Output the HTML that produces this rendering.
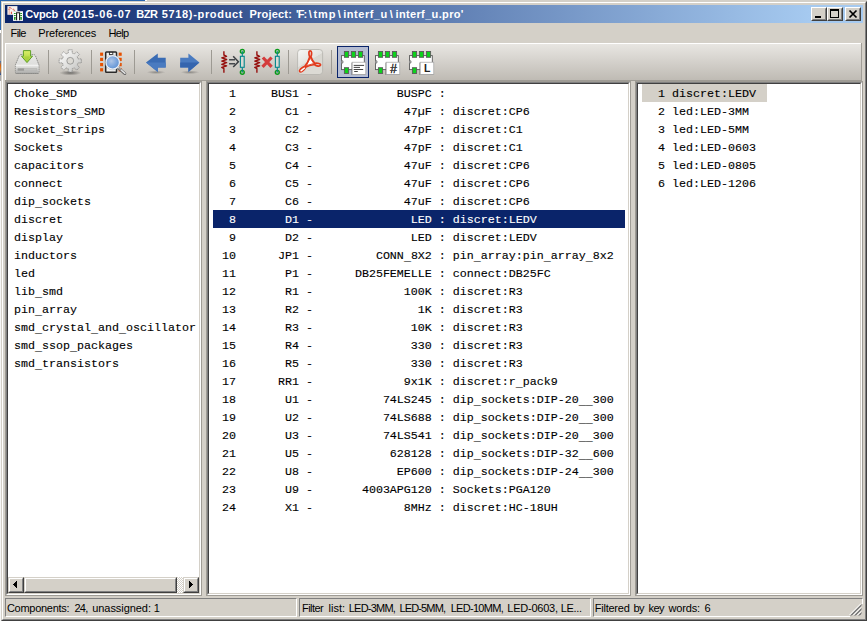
<!DOCTYPE html><html><head><meta charset="utf-8"><title>Cvpcb</title><style>
html,body{margin:0;padding:0}
body{width:867px;height:621px;position:relative;overflow:hidden;background:#D4D0C8;font-family:"Liberation Sans",sans-serif;font-size:11px;color:#000}
.a{position:absolute}
.t{position:absolute;white-space:pre;line-height:14px;height:14px}
.mono{font-family:"Liberation Mono",monospace;font-size:11.665px}
.row{position:absolute;left:0;height:18px;line-height:18px;white-space:pre;font-family:"Liberation Mono",monospace;font-size:11.665px;color:#000}
.row span{position:relative;top:1px;-webkit-text-stroke:0.12px}
.row u{text-decoration:none;position:relative;top:2px}
.panel{position:absolute;background:#fff;overflow:hidden}
.sunk{position:absolute;box-sizing:border-box;border:1px solid;border-color:#808080 #fff #fff #808080}
.sunk2{position:absolute;box-sizing:border-box;border:1px solid;border-color:#404040 #D4D0C8 #D4D0C8 #404040}
.btn{position:absolute;box-sizing:border-box;background:#D4D0C8;border:1px solid;border-color:#fff #404040 #404040 #fff}
.btn:after{content:"";position:absolute;left:0;top:0;right:0;bottom:0;border:1px solid;border-color:#D4D0C8 #808080 #808080 #D4D0C8}
.sb{position:absolute;box-sizing:border-box;background:#D4D0C8;border:1px solid;border-color:#D4D0C8 #404040 #404040 #D4D0C8}
.sb:after{content:"";position:absolute;left:0;top:0;right:0;bottom:0;border:1px solid;border-color:#fff #808080 #808080 #fff}
.sep{position:absolute;width:1px;top:50px;height:24px;background:#9D9A93}
.fld{position:absolute;box-sizing:border-box;top:598px;height:19px;border:1px solid;border-color:#808080 #fff #fff #808080}
</style></head><body>
<div class="a" style="left:0;top:0;width:145px;height:1px;background:#2A66AE"></div>
<div class="a" style="left:145px;top:0;width:2px;height:1px;background:#fff"></div>
<div class="a" style="left:0;top:0;width:1px;height:30px;background:#2A66AE"></div>
<div class="a" style="left:0;top:30px;width:1px;height:3px;background:#fff"></div>
<div class="a" style="left:0;top:33px;width:1px;height:48px;background:#A8A8A8"></div>
<div class="a" style="left:0;top:81px;width:1px;height:540px;background:#F6F6F6"></div>
<div class="a" style="left:0;top:61px;width:1px;height:14px;background:linear-gradient(#3A7AC0,#D06010 30%,#E08020 60%,#2050A0)"></div>
<div class="a" style="left:1px;top:1px;width:866px;height:620px;box-sizing:border-box;border:1px solid;border-color:#D4D0C8 #404040 #404040 #D4D0C8;background:#D4D0C8"></div>
<div class="a" style="left:2px;top:2px;width:864px;height:618px;box-sizing:border-box;border:1px solid;border-color:#fff #808080 #808080 #fff"></div>
<div class="a" style="left:5px;top:5px;width:858px;height:18px;background:linear-gradient(90deg,#0A246A,#A6CAF0 94%)"></div>
<svg class="a" style="left:7px;top:6px" width="16" height="16" viewBox="0 0 16 16"><rect x="0.4" y="0.1" width="10" height="8.7" fill="#f6f2f0"/><path d="M2.2 1.2V8.6" stroke="#E8A090" stroke-width="0.8" fill="none"/><path d="M1 3.4H3.2" stroke="#E89080" stroke-width="0.9" fill="none"/><path d="M2.6 1.2L4.4 2.6M5.8 3L7.6 4.6M4 6L5 6.8L4 7.6" stroke="#D63A2A" stroke-width="1.1" fill="none" stroke-dasharray="1 0.5"/><rect x="6.05" y="5.2" width="9.9" height="9.7" fill="#fff"/><path d="M6.3 5.4H13.5" stroke="#aaa" stroke-width="0.5"/><path d="M9.6 14.2V6.8H12.6V14.2" fill="#fff" stroke="#1c1c1c" stroke-width="1.1"/><g fill="#0A8A0A"><rect x="6.9" y="7.1" width="1.8" height="0.9"/><rect x="6.9" y="9" width="1.8" height="0.9"/><rect x="7.1" y="10.7" width="1.4" height="3.2" rx="0.6"/><rect x="13.2" y="7.1" width="1.8" height="0.9"/><rect x="13.2" y="9" width="1.8" height="0.9"/><rect x="13.4" y="10.7" width="1.4" height="3.2" rx="0.6"/></g></svg>
<div class="t " style="left:25.3px;top:7px;letter-spacing:-0.155px;font-weight:bold;color:#fff;">Cvpcb</div>
<div class="t " style="left:62.7px;top:7px;letter-spacing:0.806px;font-weight:bold;color:#fff;">(2015-06-07</div>
<div class="t " style="left:136.2px;top:7px;letter-spacing:-0.400px;font-weight:bold;color:#fff;">BZR</div>
<div class="t " style="left:161.7px;top:7px;letter-spacing:0.672px;font-weight:bold;color:#fff;">5718)-product</div>
<div class="t " style="left:249.4px;top:7px;letter-spacing:0.220px;font-weight:bold;color:#fff;">Project:</div>
<div class="t " style="left:296px;top:7px;letter-spacing:-0.900px;font-weight:bold;color:#fff;">'F:</div>
<div class="t " style="left:308.72px;top:7px;letter-spacing:0.000px;font-weight:bold;color:#fff;">\</div>
<div class="t " style="left:313.4px;top:7px;letter-spacing:0.970px;font-weight:bold;color:#fff;">tmp</div>
<div class="t " style="left:337.77px;top:7px;letter-spacing:0.000px;font-weight:bold;color:#fff;">\</div>
<div class="t " style="left:343.3px;top:7px;letter-spacing:0.509px;font-weight:bold;color:#fff;">interf_u</div>
<div class="t " style="left:389.82px;top:7px;letter-spacing:0.000px;font-weight:bold;color:#fff;">\</div>
<div class="t " style="left:395.5px;top:7px;letter-spacing:0.355px;font-weight:bold;color:#fff;">interf_u.pro'</div>
<div class="btn" style="left:811px;top:7px;width:16px;height:14px"></div>
<div class="a" style="left:815px;top:16px;width:6px;height:2px;background:#000"></div>
<div class="btn" style="left:827px;top:7px;width:16px;height:14px"></div>
<div class="a" style="left:830px;top:9px;width:9px;height:9px;box-sizing:border-box;border:1px solid #000;border-top-width:2px"></div>
<div class="btn" style="left:845px;top:7px;width:16px;height:14px"></div>
<svg class="a" style="left:845px;top:7px" width="16" height="14" viewBox="0 0 16 14"><path d="M4.5 3.5L11.5 10.5M11.5 3.5L4.5 10.5" stroke="#000" stroke-width="1.7" fill="none"/></svg>
<div class="t " style="left:10.6px;top:26px;letter-spacing:-0.673px;">File</div>
<div class="t " style="left:38.3px;top:26px;letter-spacing:-0.142px;">Preferences</div>
<div class="t " style="left:108.6px;top:26px;letter-spacing:-0.740px;">Help</div>
<div class="a" style="left:5px;top:43px;width:856px;height:37px;background:linear-gradient(#E9E7E3,#BFBBB4)"></div>
<div class="a" style="left:5px;top:43px;width:856px;height:1px;background:#fff"></div>
<div class="a" style="left:5px;top:43px;width:1px;height:37px;background:#fff"></div>
<div class="a" style="left:861px;top:43px;width:1px;height:37px;background:#A09D96"></div>
<div class="a" style="left:5px;top:80px;width:857px;height:1px;background:#9F9C95"></div>
<div class="a" style="left:5px;top:81px;width:197px;height:515px;box-sizing:border-box;border:1px solid #9F9C95"></div>
<div class="a" style="left:206px;top:81px;width:425px;height:515px;box-sizing:border-box;border:1px solid #9F9C95"></div>
<div class="a" style="left:635px;top:81px;width:228px;height:515px;box-sizing:border-box;border:1px solid #9F9C95"></div>
<div class="sep" style="left:48px"></div>
<div class="sep" style="left:91px"></div>
<div class="sep" style="left:134px"></div>
<div class="sep" style="left:211px"></div>
<div class="sep" style="left:288px"></div>
<div class="sep" style="left:331px"></div>
<div class="a" style="left:337px;top:46px;width:32px;height:32px;box-sizing:border-box;border:1px solid #0A246A;background:#B6BDD2"></div>
<svg class="a" style="left:10px;top:46px" width="34" height="34" viewBox="0 0 34 34"><defs><linearGradient id="sv1" x1="0" y1="0" x2="0" y2="1"><stop offset="0" stop-color="#e8e8e6"/><stop offset="1" stop-color="#d6d6d4"/></linearGradient><linearGradient id="sv3" x1="0" y1="0" x2="0" y2="1"><stop offset="0" stop-color="#ececea"/><stop offset="1" stop-color="#acacaa"/></linearGradient><linearGradient id="sv2" x1="0" y1="0" x2="0" y2="1"><stop offset="0" stop-color="#DDF06A"/><stop offset="1" stop-color="#9CCB30"/></linearGradient></defs><path d="M10.6 8.7H24Q25 8.7 25.5 9.9L28.9 18.8V26Q28.9 27.5 27.4 27.5H6.9Q5.4 27.5 5.4 26V18.8L9.1 9.9Q9.6 8.7 10.6 8.7Z" fill="url(#sv1)" stroke="#767674" stroke-width="0.8" stroke-dasharray="1.5 0.7"/><path d="M5.8 19H28.5V26Q28.5 27.1 27.4 27.1H6.9Q5.8 27.1 5.8 26Z" fill="url(#sv3)"/><path d="M5.6 27.5H28.4" stroke="#8a8a88" stroke-width="0.8"/><path d="M5.7 19.2H28.3" stroke="#fff" stroke-width="0.7" opacity="0.9"/><rect x="7.6" y="22.2" width="19.2" height="2.6" rx="0.5" fill="#8e8e8c" opacity="0.8"/><rect x="14" y="22.2" width="12.8" height="2.6" rx="0.5" fill="#c8c8c6" opacity="0.85"/><path d="M13.4 4.6H20.6V10.2H22.5L17 16.6L11.5 10.2H13.4Z" fill="url(#sv2)" stroke="#5FA02A" stroke-width="1"/><path d="M14.4 10.6H19.6V11.8L17 15L14.4 11.8Z" fill="#A8CE3C" opacity="0.7"/></svg>
<svg class="a" style="left:53px;top:46px" width="34" height="34" viewBox="0 0 34 34"><defs><linearGradient id="gr1" x1="0" y1="0" x2="1" y2="1"><stop offset="0" stop-color="#ffffff"/><stop offset="0.5" stop-color="#e2e2e0"/><stop offset="1" stop-color="#bdbdbb"/></linearGradient><radialGradient id="gr2"><stop offset="0" stop-color="#000" stop-opacity="0.45"/><stop offset="1" stop-color="#000" stop-opacity="0"/></radialGradient></defs><ellipse cx="17.25" cy="26.9" rx="11" ry="2.6" fill="url(#gr2)"/><path d="M15.28 7.04L15.26 3.78L19.24 3.78L19.22 7.04L21.41 7.95L23.71 5.63L26.52 8.44L24.20 10.74L25.11 12.93L28.37 12.91L28.37 16.89L25.11 16.87L24.20 19.06L26.52 21.36L23.71 24.17L21.41 21.85L19.22 22.76L19.24 26.02L15.26 26.02L15.28 22.76L13.09 21.85L10.79 24.17L7.98 21.36L10.30 19.06L9.39 16.87L6.13 16.89L6.13 12.91L9.39 12.93L10.30 10.74L7.98 8.44L10.79 5.63L13.09 7.95Z" fill="url(#gr1)" stroke="#8c8c8a" stroke-width="0.8" stroke-linejoin="round" stroke-dasharray="1.5 0.6"/><circle cx="17.25" cy="14.8" r="3.4" fill="#dcdad4" stroke="#8c8c8a" stroke-width="0.8"/></svg>
<svg class="a" style="left:96px;top:46px" width="34" height="34" viewBox="0 0 34 34"><defs><radialGradient id="vw1" cx="0.4" cy="0.4"><stop offset="0" stop-color="#B0C6E6"/><stop offset="0.6" stop-color="#86ACDF"/><stop offset="1" stop-color="#6C9BD8"/></radialGradient></defs><rect x="4.1" y="6.6" width="3" height="3.2" fill="#E65100"/><rect x="4.1" y="11.8" width="3" height="3.2" fill="#E65100"/><rect x="4.1" y="17" width="3" height="3.2" fill="#E65100"/><rect x="4.1" y="22.2" width="3" height="3.2" fill="#E65100"/><rect x="22.7" y="6.6" width="3" height="3.2" fill="#E65100"/><rect x="22.7" y="11.8" width="3" height="3.2" fill="#E65100"/><rect x="22.7" y="17" width="3" height="3.2" fill="#E65100"/><rect x="22.7" y="22.2" width="3" height="3.2" fill="#E65100"/><rect x="9.7" y="5.9" width="10.8" height="20.3" rx="0.8" fill="#f0f0ee" stroke="#2a2a2a" stroke-width="1.5"/><rect x="13.4" y="6.3" width="3.4" height="2.2" fill="#fff" stroke="#2a2a2a" stroke-width="0.9"/><path d="M21.8 21.5L28.9 27.6" stroke="#5e5e5e" stroke-width="2.8" stroke-linecap="round"/><path d="M22 21.4L29 27.4" stroke="#e2e2e2" stroke-width="1.4" stroke-linecap="round"/><path d="M22.4 22.2L25 24.4" stroke="#888" stroke-width="1.4"/><circle cx="16.7" cy="16.4" r="6.8" fill="url(#vw1)" stroke="#f4f6fa" stroke-width="1.3"/><circle cx="16.7" cy="16.4" r="7.5" fill="none" stroke="#9aa0a8" stroke-width="0.4"/></svg>
<svg class="a" style="left:139px;top:46px" width="34" height="34" viewBox="0 0 34 34"><defs><radialGradient id="ar0"><stop offset="0" stop-color="#000" stop-opacity="0.3"/><stop offset="1" stop-color="#000" stop-opacity="0"/></radialGradient></defs><ellipse cx="17" cy="26.3" rx="9.5" ry="1.8" fill="url(#ar0)"/><path d="M7 16.5L18.8 7.4V11.8H26.7V21.6H18.8V25.9Z" fill="#3A6CB4"/><path d="M7 16.5H26.7V21.6H18.8V25.9Z" fill="#4A7BC0"/></svg>
<svg class="a" style="left:173px;top:46px" width="34" height="34" viewBox="0 0 34 34"><ellipse cx="17" cy="26.3" rx="9.5" ry="1.8" fill="url(#ar0)"/><path d="M26.4 16.5L15.4 7.4V11.8H7.2V21.6H15.4V25.9Z" fill="#4A7BC0"/><path d="M26.4 16.5H7.2V21.6H15.4V25.9Z" fill="#3565AE"/></svg>
<svg class="a" style="left:216px;top:46px" width="34" height="34" viewBox="0 0 34 34"><path d="M7.9 5.2V9L10.6 10.3L5.8 11.9L10.6 13.5L5.8 15.1L10.6 16.7L5.8 18.3L10.6 19.9L5.8 21.5L7.9 22.6V26.8" fill="none" stroke="#96100E" stroke-width="1.4" stroke-linejoin="round"/><path d="M13.1 13.7H19M13.1 17.8H19" stroke="#45494d" stroke-width="1.5"/><path d="M17.2 10.3L22.4 15.7L17.2 21.1" fill="none" stroke="#3c4044" stroke-width="1.5"/><circle cx="26.3" cy="5.3" r="2" fill="#2e9a3a" fill-opacity="0.35" stroke="#0A9A1A" stroke-width="1.3"/><circle cx="26.3" cy="26.3" r="2" fill="#2e9a3a" fill-opacity="0.35" stroke="#0A9A1A" stroke-width="1.3"/><path d="M26.3 5.3V10.2M26.3 21.4V26.3" stroke="#00858B" stroke-width="1.1"/><rect x="24.4" y="10.3" width="3.8" height="11" fill="#d9d9d3" stroke="#00858B" stroke-width="1.1"/></svg>
<svg class="a" style="left:250px;top:46px" width="34" height="34" viewBox="0 0 34 34"><path d="M6.9 5.2V9L9.6 10.3L4.8 11.9L9.6 13.5L4.8 15.1L9.6 16.7L4.8 18.3L9.6 19.9L4.8 21.5L6.9 22.6V26.8" fill="none" stroke="#96100E" stroke-width="1.4" stroke-linejoin="round"/><path d="M12.9 11.5L21.6 20.8M21.6 11.5L12.5 20.8" stroke="#D43C3C" stroke-width="3.2" fill="none"/><circle cx="27.3" cy="5.3" r="2" fill="#2e9a3a" fill-opacity="0.35" stroke="#0A9A1A" stroke-width="1.3"/><circle cx="27.3" cy="26.3" r="2" fill="#2e9a3a" fill-opacity="0.35" stroke="#0A9A1A" stroke-width="1.3"/><path d="M27.3 5.3V10.2M27.3 21.4V26.3" stroke="#00858B" stroke-width="1.1"/><rect x="25.4" y="10.3" width="3.8" height="11" fill="#d9d9d3" stroke="#00858B" stroke-width="1.1"/></svg>
<svg class="a" style="left:293px;top:46px" width="34" height="34" viewBox="0 0 34 34"><defs><linearGradient id="pd1" x1="0" y1="0" x2="0.5" y2="0.85"><stop offset="0" stop-color="#f8f8f6"/><stop offset="0.62" stop-color="#e4e3df"/><stop offset="0.64" stop-color="#d8d6d0"/><stop offset="1" stop-color="#dcdad4"/></linearGradient></defs><rect x="4.6" y="3.5" width="25" height="25" rx="3.2" fill="url(#pd1)" stroke="#b4b2ac" stroke-width="0.8"/><path d="M17.3 4.8C15.5 4.8 15.6 8.2 16.7 11C15.6 14.8 13.6 18.4 11.8 20.4C8.6 21.6 5.8 23.8 6.6 25.5C7.8 27 10.8 24.6 12.9 21C15.2 19.9 18.8 19 21.4 18.5C23.6 20.2 26.8 20.7 27.5 19.2C28 17.5 24.8 16.9 21.8 17.3C20.2 15.6 18.7 13.2 17.9 10.8C18.9 8 19 4.8 17.3 4.8Z" fill="none" stroke="#E23A1C" stroke-width="1.7" stroke-linejoin="round"/><path d="M17.2 12.2L20.8 17.5L13.4 19.7Z" fill="#fff" stroke="#E23A1C" stroke-width="0.9"/><path d="M8 25L11.6 22" stroke="#fff" stroke-width="1.1" stroke-linecap="round"/></svg>
<svg class="a" style="left:336px;top:46px" width="34" height="34" viewBox="0 0 34 34"><rect x="5.5" y="9.6" width="22.8" height="14" fill="#fff" stroke="#5a5a5a" stroke-width="0.9"/><rect x="8.4" y="5.5" width="4.2" height="5.8" fill="#0CD21C" stroke="#5a5a5a" stroke-width="0.9"/><rect x="15.4" y="5.5" width="4.2" height="5.8" fill="#0CD21C" stroke="#5a5a5a" stroke-width="0.9"/><rect x="22.4" y="5.5" width="4.2" height="5.8" fill="#0CD21C" stroke="#5a5a5a" stroke-width="0.9"/><rect x="8.4" y="21.7" width="4.2" height="5.8" fill="#0CD21C" stroke="#5a5a5a" stroke-width="0.9"/><path d="M5.6 14.4A1.5 1.5 0 0 1 5.6 17.4" fill="#c8c8c8" stroke="#5a5a5a" stroke-width="0.7"/><rect x="15.4" y="16.6" width="14.2" height="12.3" fill="#3a3a3a" opacity="0.6"/><rect x="16.2" y="16.2" width="13.6" height="12.2" fill="#fff" stroke="#a8a8a8" stroke-width="0.7"/><path d="M18.1 19.4H27.7M18.1 21.4H23.6M18.1 23.5H26.8M18.6 25.5H21.4" stroke="#2e2e2e" stroke-width="0.9" stroke-linecap="round"/></svg>
<svg class="a" style="left:370px;top:46px" width="34" height="34" viewBox="0 0 34 34"><rect x="5.5" y="9.6" width="22.8" height="14" fill="#fff" stroke="#5a5a5a" stroke-width="0.9"/><rect x="8.4" y="5.5" width="4.2" height="5.8" fill="#0CD21C" stroke="#5a5a5a" stroke-width="0.9"/><rect x="15.4" y="5.5" width="4.2" height="5.8" fill="#0CD21C" stroke="#5a5a5a" stroke-width="0.9"/><rect x="22.4" y="5.5" width="4.2" height="5.8" fill="#0CD21C" stroke="#5a5a5a" stroke-width="0.9"/><rect x="8.4" y="21.7" width="4.2" height="5.8" fill="#0CD21C" stroke="#5a5a5a" stroke-width="0.9"/><path d="M5.6 14.4A1.5 1.5 0 0 1 5.6 17.4" fill="#c8c8c8" stroke="#5a5a5a" stroke-width="0.7"/><rect x="15.4" y="16.6" width="14.2" height="12.3" fill="#3a3a3a" opacity="0.6"/><rect x="16.2" y="16.2" width="13.6" height="12.2" fill="#fff" stroke="#a8a8a8" stroke-width="0.7"/><text x="23.3" y="26.9" text-anchor="middle" font-family="Liberation Sans,sans-serif" font-size="12" font-style="italic" fill="#222" stroke="#222" stroke-width="0.35">#</text></svg>
<svg class="a" style="left:404px;top:46px" width="34" height="34" viewBox="0 0 34 34"><rect x="5.5" y="9.6" width="22.8" height="14" fill="#fff" stroke="#5a5a5a" stroke-width="0.9"/><rect x="8.4" y="5.5" width="4.2" height="5.8" fill="#0CD21C" stroke="#5a5a5a" stroke-width="0.9"/><rect x="15.4" y="5.5" width="4.2" height="5.8" fill="#0CD21C" stroke="#5a5a5a" stroke-width="0.9"/><rect x="22.4" y="5.5" width="4.2" height="5.8" fill="#0CD21C" stroke="#5a5a5a" stroke-width="0.9"/><rect x="8.4" y="21.7" width="4.2" height="5.8" fill="#0CD21C" stroke="#5a5a5a" stroke-width="0.9"/><path d="M5.6 14.4A1.5 1.5 0 0 1 5.6 17.4" fill="#c8c8c8" stroke="#5a5a5a" stroke-width="0.7"/><rect x="15.4" y="16.6" width="14.2" height="12.3" fill="#3a3a3a" opacity="0.6"/><rect x="16.2" y="16.2" width="13.6" height="12.2" fill="#fff" stroke="#a8a8a8" stroke-width="0.7"/><text x="23.2" y="26" text-anchor="middle" font-family="Liberation Sans,sans-serif" font-size="10.5" font-weight="bold" fill="#222">L</text></svg>
<div class="sunk" style="left:6px;top:82px;width:195px;height:513px"></div>
<div class="sunk2" style="left:7px;top:83px;width:193px;height:511px"></div>
<div class="panel" style="left:8px;top:84px;width:191px;height:493px">
<div class="row" style="left:6px;top:0px"><span>Choke<u>_</u>SMD</span></div>
<div class="row" style="left:6px;top:18px"><span>Resistors<u>_</u>SMD</span></div>
<div class="row" style="left:6px;top:36px"><span>Socket<u>_</u>Strips</span></div>
<div class="row" style="left:6px;top:54px"><span>Sockets</span></div>
<div class="row" style="left:6px;top:72px"><span>capacitors</span></div>
<div class="row" style="left:6px;top:90px"><span>connect</span></div>
<div class="row" style="left:6px;top:108px"><span>dip<u>_</u>sockets</span></div>
<div class="row" style="left:6px;top:126px"><span>discret</span></div>
<div class="row" style="left:6px;top:144px"><span>display</span></div>
<div class="row" style="left:6px;top:162px"><span>inductors</span></div>
<div class="row" style="left:6px;top:180px"><span>led</span></div>
<div class="row" style="left:6px;top:198px"><span>lib<u>_</u>smd</span></div>
<div class="row" style="left:6px;top:216px"><span>pin<u>_</u>array</span></div>
<div class="row" style="left:6px;top:234px"><span>smd<u>_</u>crystal<u>_</u>and<u>_</u>oscillator</span></div>
<div class="row" style="left:6px;top:252px"><span>smd<u>_</u>ssop<u>_</u>packages</span></div>
<div class="row" style="left:6px;top:270px"><span>smd<u>_</u>transistors</span></div>
</div>
<div class="a" style="left:8px;top:577px;width:191px;height:16px;background:#fff;background-image:conic-gradient(#D4D0C8 25%,#fff 0 50%,#D4D0C8 0 75%,#fff 0);background-size:2px 2px"></div>
<div class="sb" style="left:8px;top:577px;width:16px;height:16px"></div>
<div class="sb" style="left:183px;top:577px;width:16px;height:16px"></div>
<div class="sb" style="left:24px;top:577px;width:153px;height:16px"></div>
<svg class="a" style="left:8px;top:577px" width="16" height="16"><path d="M5 7h1v1h-1zM6 6h1v3h-1zM7 5h1v5h-1zM8 4h1v7h-1z" fill="#000" shape-rendering="crispEdges"/></svg>
<svg class="a" style="left:183px;top:577px" width="16" height="16"><path d="M6 4h1v7h-1zM7 5h1v5h-1zM8 6h1v3h-1zM9 7h1v1h-1z" fill="#000" shape-rendering="crispEdges"/></svg>
<div class="sunk" style="left:207px;top:82px;width:423px;height:513px"></div>
<div class="sunk2" style="left:208px;top:83px;width:421px;height:511px"></div>
<div class="panel" style="left:209px;top:84px;width:419px;height:509px">
<div class="row" style="left:6px;top:0px"><span>  1     BUS1 -            BUSPC : </span></div>
<div class="row" style="left:6px;top:18px"><span>  2       C1 -             47µF : discret:CP6</span></div>
<div class="row" style="left:6px;top:36px"><span>  3       C2 -             47pF : discret:C1</span></div>
<div class="row" style="left:6px;top:54px"><span>  4       C3 -             47pF : discret:C1</span></div>
<div class="row" style="left:6px;top:72px"><span>  5       C4 -             47uF : discret:CP6</span></div>
<div class="row" style="left:6px;top:90px"><span>  6       C5 -             47uF : discret:CP6</span></div>
<div class="row" style="left:6px;top:108px"><span>  7       C6 -             47uF : discret:CP6</span></div>
<div class="a" style="left:4px;top:126px;width:412px;height:18px;background:#0A246A"></div>
<div class="row" style="left:6px;top:126px;color:#fff"><span>  8       D1 -              LED : discret:LEDV</span></div>
<div class="row" style="left:6px;top:144px"><span>  9       D2 -              LED : discret:LEDV</span></div>
<div class="row" style="left:6px;top:162px"><span> 10      JP1 -         CONN<u>_</u>8X2 : pin<u>_</u>array:pin<u>_</u>array<u>_</u>8x2</span></div>
<div class="row" style="left:6px;top:180px"><span> 11       P1 -      DB25FEMELLE : connect:DB25FC</span></div>
<div class="row" style="left:6px;top:198px"><span> 12       R1 -             100K : discret:R3</span></div>
<div class="row" style="left:6px;top:216px"><span> 13       R2 -               1K : discret:R3</span></div>
<div class="row" style="left:6px;top:234px"><span> 14       R3 -              10K : discret:R3</span></div>
<div class="row" style="left:6px;top:252px"><span> 15       R4 -              330 : discret:R3</span></div>
<div class="row" style="left:6px;top:270px"><span> 16       R5 -              330 : discret:R3</span></div>
<div class="row" style="left:6px;top:288px"><span> 17      RR1 -             9x1K : discret:r<u>_</u>pack9</span></div>
<div class="row" style="left:6px;top:306px"><span> 18       U1 -          74LS245 : dip<u>_</u>sockets:DIP-20<u>_</u><u>_</u>300</span></div>
<div class="row" style="left:6px;top:324px"><span> 19       U2 -          74LS688 : dip<u>_</u>sockets:DIP-20<u>_</u><u>_</u>300</span></div>
<div class="row" style="left:6px;top:342px"><span> 20       U3 -          74LS541 : dip<u>_</u>sockets:DIP-20<u>_</u><u>_</u>300</span></div>
<div class="row" style="left:6px;top:360px"><span> 21       U5 -           628128 : dip<u>_</u>sockets:DIP-32<u>_</u><u>_</u>600</span></div>
<div class="row" style="left:6px;top:378px"><span> 22       U8 -            EP600 : dip<u>_</u>sockets:DIP-24<u>_</u><u>_</u>300</span></div>
<div class="row" style="left:6px;top:396px"><span> 23       U9 -       4003APG120 : Sockets:PGA120</span></div>
<div class="row" style="left:6px;top:414px"><span> 24       X1 -             8MHz : discret:HC-18UH</span></div>
</div>
<div class="sunk" style="left:636px;top:82px;width:226px;height:513px"></div>
<div class="sunk2" style="left:637px;top:83px;width:224px;height:511px"></div>
<div class="panel" style="left:638px;top:84px;width:222px;height:509px">
<div class="a" style="left:4px;top:0px;width:125px;height:18px;background:#D4D0C8"></div>
<div class="row" style="left:6px;top:0px;color:#000"><span>  1 discret:LEDV</span></div>
<div class="row" style="left:6px;top:18px"><span>  2 led:LED-3MM</span></div>
<div class="row" style="left:6px;top:36px"><span>  3 led:LED-5MM</span></div>
<div class="row" style="left:6px;top:54px"><span>  4 led:LED-0603</span></div>
<div class="row" style="left:6px;top:72px"><span>  5 led:LED-0805</span></div>
<div class="row" style="left:6px;top:90px"><span>  6 led:LED-1206</span></div>
</div>
<div class="fld" style="left:5px;width:292px"></div>
<div class="fld" style="left:299px;width:292px"></div>
<div class="fld" style="left:593px;width:270px"></div>
<div class="t " style="left:6.9px;top:601px;letter-spacing:-0.274px;">Components:</div>
<div class="t " style="left:74.5px;top:601px;letter-spacing:-0.800px;">24,</div>
<div class="t " style="left:92.2px;top:601px;letter-spacing:-0.054px;">unassigned:</div>
<div class="t " style="left:153.79px;top:601px;letter-spacing:0.000px;">1</div>
<div class="t " style="left:302.1px;top:601px;letter-spacing:-0.568px;">Filter</div>
<div class="t " style="left:328.5px;top:601px;letter-spacing:0.000px;">list:</div>
<div class="t " style="left:348.8px;top:601px;letter-spacing:-0.794px;">LED-3MM,</div>
<div class="t " style="left:399.5px;top:601px;letter-spacing:-0.866px;">LED-5MM,</div>
<div class="t " style="left:450.7px;top:601px;letter-spacing:-0.710px;">LED-10MM,</div>
<div class="t " style="left:507.3px;top:601px;letter-spacing:-0.238px;">LED-0603,</div>
<div class="t " style="left:560.8px;top:601px;letter-spacing:-0.360px;">LE...</div>
<div class="t " style="left:594.75px;top:601px;letter-spacing:-0.233px;">Filtered</div>
<div class="t " style="left:633.4px;top:601px;letter-spacing:-0.620px;">by</div>
<div class="t " style="left:648.4px;top:601px;letter-spacing:-0.510px;">key</div>
<div class="t " style="left:668.62px;top:601px;letter-spacing:-0.204px;">words:</div>
<div class="t " style="left:704.54px;top:601px;letter-spacing:0.000px;">6</div>
<div class="a" style="left:850px;top:616px;width:13px;height:1px;background:#D4D0C8"></div>
<div class="a" style="left:862px;top:604px;width:1px;height:13px;background:#D4D0C8"></div>
<svg class="a" style="left:848px;top:602px" width="14" height="14" viewBox="0 0 14 14"><g stroke-width="1"><path d="M13 1.5L1.5 13M13 5.5L5.5 13M13 9.5L9.5 13" stroke="#fff" fill="none"/><path d="M13.5 2.5L2.5 13.5M13.5 3.5L3.5 13.5M13.5 6.5L6.5 13.5M13.5 7.5L7.5 13.5M13.5 10.5L10.5 13.5M13.5 11.5L11.5 13.5" stroke="#808080" fill="none"/></g></svg>
</body></html>
